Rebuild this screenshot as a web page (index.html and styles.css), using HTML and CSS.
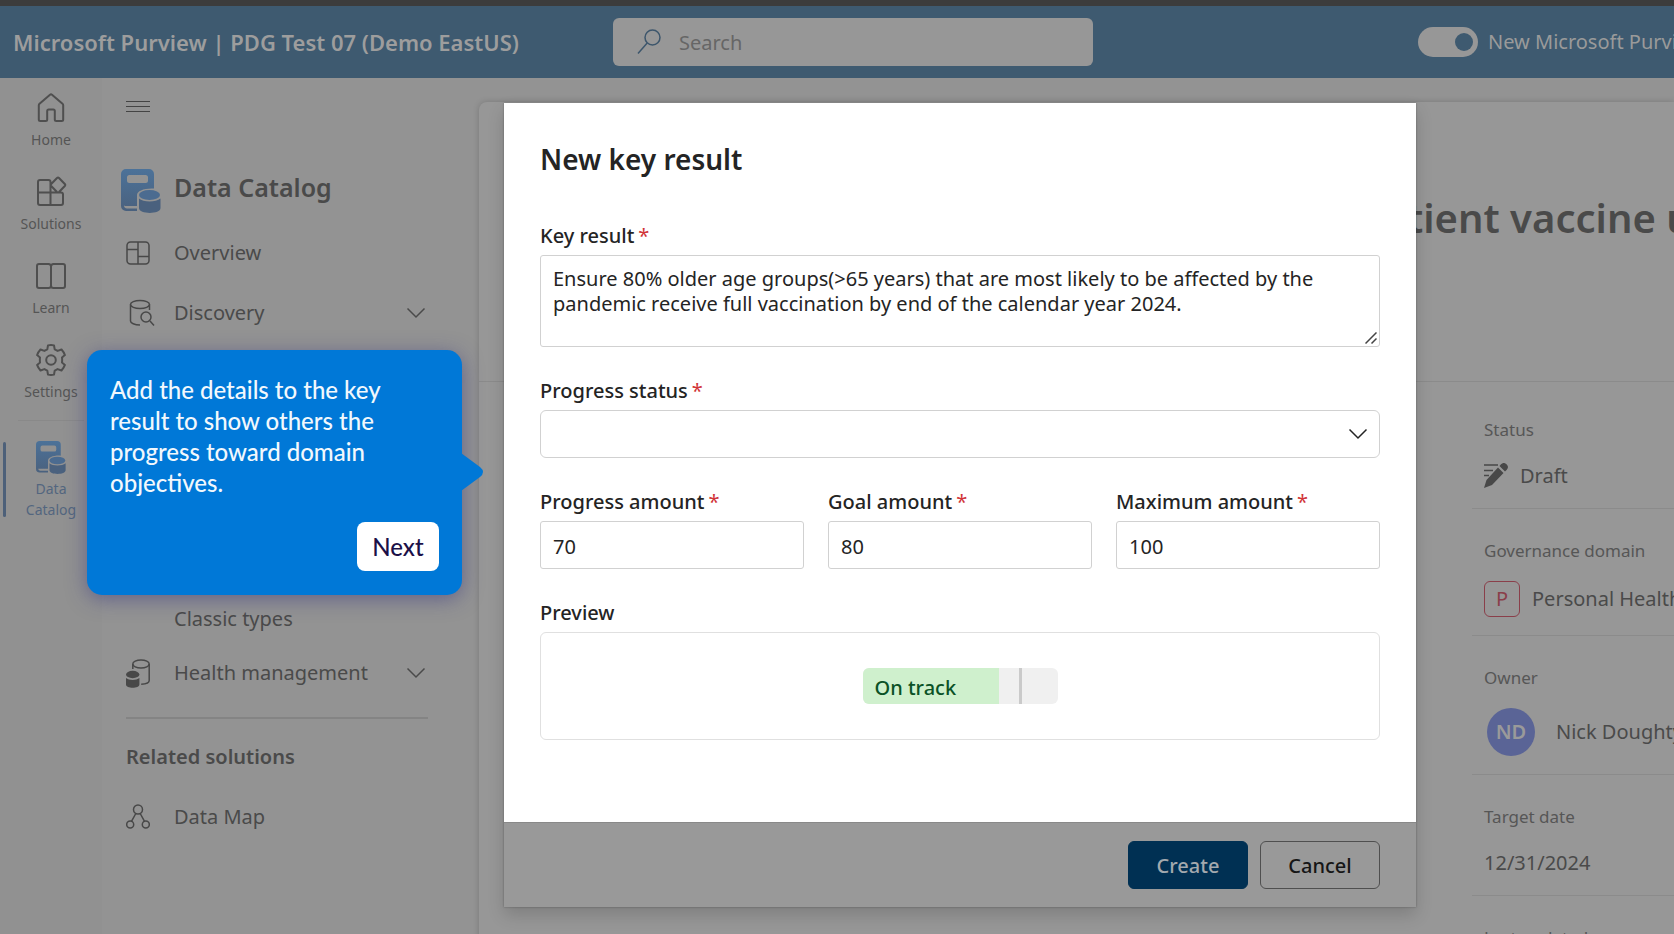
FILE: index.html
```html
<!DOCTYPE html>
<html lang="en">
<head>
<meta charset="utf-8">
<title>Microsoft Purview</title>
<link rel="stylesheet" href="styles.css">
</head>
<body>
<svg class="defs" aria-hidden="true">
  <defs>
    <linearGradient id="blue" x1="0" y1="0" x2="0" y2="1"><stop offset="0" stop-color="#4c7299"/><stop offset="1" stop-color="#4a617e"/></linearGradient>
    <symbol id="catalog" viewBox="0 0 40 44">
      <path fill="url(#blue)" fill-rule="evenodd" d="M5 0H28a5 5 0 0 1 5 5V19.500C23 19 16 22 16 26V42H5a5 5 0 0 1-5-5V5a5 5 0 0 1 5-5ZM8.500 6a2.500 2.500 0 0 0-2.500 2.500v3a2.500 2.500 0 0 0 2.500 2.500h16a2.500 2.500 0 0 0 2.500-2.500v-3a2.500 2.500 0 0 0-2.500-2.500ZM3 36.500c0 2 1.500 3 3 3h10v-2.500H5c-1 0-2-.2-2-.5Z"/>
      <ellipse cx="28.500" cy="26" rx="10.500" ry="5" fill="#4b6b90"/>
      <path fill="#4a617e" d="M18 29.500c4 4 17 4 21.500 0V39c0 6.500-21.500 6.500-21.500 0Z"/>
    </symbol>
    <symbol id="chevron" viewBox="0 0 20 12"><path d="M1.500 1.500 10 10l8.500-8.500" fill="none" stroke="currentColor" stroke-width="1.500"/></symbol>
  </defs>
</svg>

<header class="topbar">
  <span class="brand">Microsoft Purview | PDG Test 07 (Demo EastUS)</span>
  <label class="search">
    <svg width="24" height="26" viewBox="0 0 24 26" fill="none" stroke="#3d566c" stroke-width="1.500"><circle cx="15.500" cy="8.500" r="7.500"/><path d="M10.200 14 1 24.500"/></svg>
    <input type="search" placeholder="Search" aria-label="Search">
  </label>
  <label class="portal"><input type="checkbox" class="switch" checked>New Microsoft Purview portal</label>
</header>

<div class="shell">
  <nav class="rail" aria-label="Global">
    <a href="#"><svg width="32" height="32" viewBox="0 0 32 32"><path d="M15 2.700a1.600 1.600 0 0 1 2 0l10.500 9a2 2 0 0 1 .7 1.500V27.500a1.500 1.500 0 0 1-1.500 1.500h-5.400a1.500 1.500 0 0 1-1.500-1.500V19a1.500 1.500 0 0 0-1.500-1.500h-4.600a1.500 1.500 0 0 0-1.500 1.500v8.500a1.500 1.500 0 0 1-1.500 1.500H5.300a1.500 1.500 0 0 1-1.500-1.500V13.200a2 2 0 0 1 .7-1.500Z"/></svg>Home</a>
    <a href="#"><svg width="32" height="32" viewBox="0 0 32 32"><path d="M15.500 16.500H3V6a2 2 0 0 1 2-2h8.500a2 2 0 0 1 2 2V29M3 16.500V27a2 2 0 0 0 2 2h21a2 2 0 0 0 2-2v-8.500a2 2 0 0 0-2-2H15.500M22 2l-5.800 6a1.500 1.500 0 0 0 0 2l5.800 6a1.500 1.500 0 0 0 2 0l5.800-6a1.500 1.500 0 0 0 0-2L24 2a1.500 1.500 0 0 0-2 0Z"/></svg>Solutions</a>
    <a href="#"><svg width="32" height="32" viewBox="0 0 32 32"><path d="M16 6.500a2.500 2.500 0 0 0-2.500-2.500H4a2 2 0 0 0-2 2v20a2 2 0 0 0 2 2h9.500a2.500 2.500 0 0 0 2.500-2.500M16 6.500a2.500 2.500 0 0 1 2.500-2.500H28a2 2 0 0 1 2 2v20a2 2 0 0 1-2 2h-9.500a2.500 2.500 0 0 1-2.500-2.500V6.500"/></svg>Learn</a>
    <a href="#"><svg width="32" height="32" viewBox="0 0 32 32"><circle cx="16" cy="16" r="4.800"/><path d="M13 1.400Q16 .6 19 1.400L19.700 5.400Q21.200 6 22.600 6.900L26.500 5.500Q28.800 8 29.900 11.100L27 13.500Q27.300 16 27 18.500L29.900 20.900Q28.800 24 26.500 26.500L22.600 25.100Q21.200 26 19.700 26.600L19 30.600Q16 31.400 13 30.600L12.300 26.600Q10.800 26 9.400 25.100L5.500 26.500Q3.200 24 2.100 20.900L5 18.500Q4.700 16 5 13.500L2.100 11.100Q3.200 8 5.500 5.500L9.400 6.900Q10.800 6 12.300 5.400Z"/></svg>Settings</a>
    <hr>
    <a href="#" class="active" aria-current="page"><svg class="solid" width="30" height="33"><use href="#catalog"/></svg>Data<br>Catalog</a>
  </nav>

  <nav class="sidenav" aria-label="Data Catalog">
    <button class="menu" type="button" aria-label="Collapse menu"><svg width="24" height="12" viewBox="0 0 24 12"><path d="M0 .5h24M0 5.500h24M0 10.500h24" stroke="#444" stroke-width="1"/></svg></button>
    <h2><svg width="40" height="44"><use href="#catalog"/></svg>Data Catalog</h2>
    <a href="#" class="item"><svg width="24" height="24" viewBox="0 0 24 24"><rect x="1" y="1" width="22" height="22" rx="3.500"/><path d="M12 1v22M1 8.500h11M12 15.500h11"/></svg>Overview</a>
    <a href="#" class="item"><svg width="30" height="28" viewBox="0 0 30 28"><ellipse cx="14" cy="5.500" rx="9.500" ry="4"/><path d="M4.500 5.500V22c0 2 4 4 9.500 4M23.500 5.500V11M24 22l4 4.500"/><circle cx="20" cy="18" r="5"/></svg>Discovery<svg class="chev" width="20" height="12"><use href="#chevron"/></svg></a>
    <a href="#" class="subitem">Classic types</a>
    <a href="#" class="item"><svg width="24" height="29" viewBox="0 0 24 29"><ellipse cx="15" cy="5" rx="8.200" ry="4"/><path d="M6.800 5v5M23.200 5v16.500c0 2-3 3.500-8 3.700"/><g fill="#484848" stroke="none"><ellipse cx="6.700" cy="15.500" rx="6.700" ry="3.700"/><path d="M0 19c3 2.500 10.400 2.500 13.400 0v6.500c0 4.300-13.400 4.300-13.400 0Z"/></g></svg>Health management<svg class="chev" width="20" height="12"><use href="#chevron"/></svg></a>
    <hr>
    <h3>Related solutions</h3>
    <a href="#" class="item"><svg width="24" height="26" viewBox="0 0 24 26"><circle cx="12" cy="5.500" r="4.500"/><circle cx="4.200" cy="20.500" r="3.500"/><circle cx="19.800" cy="20.500" r="3.500"/><path d="M9.800 9.500 5.600 17.200M14.200 9.500l4.200 7.700"/></svg>Data Map</a>
  </nav>

  <main class="page">
    <div class="pagehead"><h1>Patient vaccine uptake</h1></div>
    <dl class="details">
      <div class="row"><dt>Status</dt><dd><svg width="24" height="26" viewBox="0 0 24 26"><path d="M0 2h14M0 7.500h9M0 12.500h5" stroke="#484848" stroke-width="1.700"/><path d="M0 25 2.500 17 14 4.500 19.500 10 8 22Z M15.500 3l1.500-1.700a4 4 0 0 1 5.800 5.500L21 8.600Z" fill="#484848"/></svg>Draft</dd></div>
      <div class="row domain"><dt>Governance domain</dt><dd><span class="badge">P</span>Personal Health</dd></div>
      <div class="row owner"><dt>Owner</dt><dd><span class="avatar">ND</span>Nick Doughty</dd></div>
      <div class="row"><dt>Target date</dt><dd>12/31/2024</dd></div>
      <div class="row"><dt>Last updated</dt></div>
    </dl>

    <form class="dialog" role="dialog" aria-labelledby="dlg-title">
      <div class="fields">
        <h2 id="dlg-title">New key result</h2>
        <div class="field">
          <label for="kr">Key result<b>*</b></label>
          <div class="textbox">
            <textarea id="kr">Ensure 80% older age groups(&gt;65 years) that are most likely to be affected by the pandemic receive full vaccination by end of the calendar year 2024.</textarea>
            <svg width="12" height="12" viewBox="0 0 12 12"><path d="M.5 11.500 11.500.5M6.500 11.500l5-5" fill="none" stroke="#444" stroke-width="1.500"/></svg>
          </div>
        </div>
        <div class="field">
          <label for="status">Progress status<b>*</b></label>
          <div class="selectbox">
            <select id="status"><option></option></select>
            <svg width="20" height="12"><use href="#chevron"/></svg>
          </div>
        </div>
        <div class="amounts">
          <div class="field"><label for="progress">Progress amount<b>*</b></label><input id="progress" type="text" value="70"></div>
          <div class="field"><label for="goal">Goal amount<b>*</b></label><input id="goal" type="text" value="80"></div>
          <div class="field"><label for="max">Maximum amount<b>*</b></label><input id="max" type="text" value="100"></div>
        </div>
        <div class="field">
          <span class="caption">Preview</span>
          <div class="preview">
            <div class="bar"><div class="fill" style="width:70%">On track</div><div class="goal" style="left:80%"></div></div>
          </div>
        </div>
      </div>
      <div class="actions">
        <button type="button" class="primary">Create</button>
        <button type="button">Cancel</button>
      </div>
    </form>
  </main>
</div>

<aside class="coach">
  <p>Add the details to the key result to show others the progress toward domain objectives.</p>
  <button type="button">Next</button>
  <svg class="arrow" width="23" height="38" viewBox="0 0 23 38"><path d="M0 0 19 14Q25 19 19 24L0 38Z" fill="#0078d7"/></svg>
</aside>
</body>
</html>
```
FILE: styles.css
```css
* { box-sizing: border-box; }
body {
  margin: 0;
  height: 100vh;
  overflow: hidden;
  display: flex;
  flex-direction: column;
  position: relative;
  background: #939393;
  color: #4a4a4a;
  font: 20px/24px "Noto Sans", "Open Sans", sans-serif;
}
h1, h2, h3, p, dl, dd { margin: 0; }
h1, h2, h3 { font-weight: 600; }
a { color: inherit; text-decoration: none; }
button, input, select, textarea { font: inherit; color: inherit; }
.defs { position: absolute; width: 0; height: 0; }

.topbar {
  flex: none;
  display: grid;
  grid-template-columns: 600px 480px minmax(0, 1fr);
  align-items: center;
  height: 78px;
  padding-left: 13px;
  border-top: 6px solid #3c3c3c;
  background: #3e5a70;
  white-space: nowrap;
}
.brand { color: #9d9d9d; font-size: 22px; font-weight: 600; }
.search {
  display: flex;
  align-items: center;
  gap: 18px;
  height: 48px;
  padding: 0 24px;
  border-radius: 6px;
  background: #979797;
}
.search input { flex: 1; min-width: 0; padding: 2px 0 0; border: 0; outline: 0; background: none; }
.search input::placeholder { color: #666; opacity: 1; }
.portal {
  display: flex;
  align-items: center;
  gap: 10px;
  margin-left: 325px;
  overflow: hidden;
  color: #9a9a9a;
}
.switch {
  appearance: none;
  flex: none;
  display: flex;
  justify-content: flex-end;
  align-items: center;
  width: 60px;
  height: 30px;
  margin: 0;
  padding: 0 5px;
  border-radius: 15px;
  background: #979797;
}
.switch::before { content: ""; width: 18px; height: 18px; border-radius: 50%; background: #3e5a70; }

.shell { flex: 1; min-height: 0; display: grid; grid-template-columns: 102px 377px minmax(0, 1fr); }

.rail { padding-top: 2px; background: #919191; color: #555; font-size: 14px; line-height: 21px; text-align: center; }
.rail a { position: relative; display: flex; flex-direction: column; align-items: center; gap: 5px; height: 84px; padding-top: 12px; }
.rail svg { fill: none; stroke: #4f4f4f; stroke-width: 2; stroke-linejoin: round; flex: none; }
.rail svg.solid { stroke: none; }
.rail hr { height: 1px; margin: 4px 18px 8px; border: 0; background: #898989; }
.rail .active { gap: 4px; height: 96px; color: #53667f; }
.rail .active::before { content: ""; position: absolute; left: 3px; top: 13px; bottom: 8px; width: 3px; border-radius: 2px; background: #4d6079; }

.sidenav { padding: 17px 51px 0 24px; }
.menu { display: flex; align-items: center; height: 24px; padding: 0; border: 0; background: none; }
.sidenav h2 { display: flex; gap: 13px; height: 60px; padding-top: 10px; margin: 40px 0 4px -5px; font-size: 25px; line-height: 36px; }
.item { display: grid; grid-template-columns: 24px 1fr 20px; column-gap: 24px; align-items: center; height: 60px; padding-right: 2px; white-space: nowrap; }
.item svg { fill: none; stroke: #484848; stroke-width: 1.500; }
.subitem { display: flex; align-items: center; height: 48px; padding-left: 48px; margin-top: 252px; }
.sidenav hr { height: 2px; margin: 14px 0 8px; border: 0; background: #848484; }
.sidenav h3 { font-size: 20px; line-height: 60px; }

.page {
  position: relative;
  display: flex;
  flex-direction: column;
  margin-top: 24px;
  border-top-left-radius: 8px;
  background: #979797;
  box-shadow: 0 0 6px rgba(0, 0, 0, .18);
}
.pagehead { height: 280px; padding: 88px 0 0 880px; border-bottom: 1px solid #8b8b8b; overflow: hidden; }
.pagehead h1 { font-size: 40px; line-height: 56px; white-space: nowrap; }
.details { width: 202px; margin-left: auto; padding-top: 6px; white-space: nowrap; }
.row { display: flex; flex-direction: column; gap: 10px; padding: 30px 0 8px 12px; border-bottom: 1px solid #8b8b8b; overflow: hidden; }
.row dt { font-size: 17px; color: #565656; }
.row dd { display: flex; align-items: center; gap: 12px; height: 48px; }
.domain { gap: 12px; padding-bottom: 12px; }
.owner { gap: 18px; padding-bottom: 18px; }
.badge { flex: none; width: 36px; height: 36px; border: 1px solid #8a3f4a; border-radius: 6px; color: #8a3f4a; line-height: 34px; text-align: center; }
.avatar { flex: none; width: 48px; height: 48px; margin: 0 9px 0 3px; border-radius: 50%; background: #5a6496; color: #9a9a9a; font-weight: 600; line-height: 48px; text-align: center; }

.dialog {
  position: absolute;
  top: 1px;
  left: 25px;
  right: 258px;
  background: #fff;
  color: #242424;
  box-shadow: 0 0 2px rgba(0, 0, 0, .3), 0 8px 16px rgba(0, 0, 0, .16);
}
.fields { display: flex; flex-direction: column; gap: 32px; padding: 36px 36px 82px; }
.fields h2 { margin-bottom: 13px; font-size: 28px; line-height: 40px; }
.field { display: flex; flex-direction: column; gap: 7px; min-width: 0; }
.field label, .caption { font-weight: 500; }
.field b { margin-left: 4px; color: #d13438; font-weight: 400; }
.field input, .field textarea, .field select {
  width: 100%;
  height: 48px;
  padding: 2px 12px 0;
  border: 1px solid #d1d1d1;
  border-radius: 3px;
  outline: 0;
  background: #fff;
}
.field textarea { display: block; height: 92px; padding: 10px 12px; line-height: 25px; resize: none; }
.selectbox, .textbox { display: grid; align-items: center; }
.selectbox > *, .textbox > * { grid-area: 1 / 1; }
.selectbox svg { justify-self: end; margin-right: 12px; pointer-events: none; }
.textbox svg { place-self: end; margin: 0 3px 3px 0; }
.field select { appearance: none; border-radius: 6px; }
.amounts { display: grid; grid-template-columns: repeat(3, 1fr); gap: 24px; }
.preview { display: flex; justify-content: center; align-items: center; height: 108px; border: 1px solid #e0e0e0; border-radius: 6px; }
.bar { position: relative; width: 195px; height: 36px; border-radius: 6px; overflow: hidden; background: #f0f0f0; }
.fill { height: 100%; padding-left: 12px; background: #cff0cd; color: #0b5226; font-weight: 500; line-height: 40px; }
.goal { position: absolute; top: 0; bottom: 0; width: 3px; background: #cacaca; }
.actions { display: flex; justify-content: flex-end; gap: 12px; padding: 18px 36px; border-top: 1px solid #898989; background: #999; }
.actions button { width: 120px; height: 48px; padding: 2px 0 0; border: 1px solid #4f4f4f; border-radius: 6px; background: none; color: #161616; font-weight: 500; }
.actions .primary { border-color: #003053; background: #003053; color: #a3a9ae; }

.coach {
  position: absolute;
  top: 350px;
  left: 87px;
  width: 375px;
  padding: 24px 23px;
  border-radius: 15px;
  background: #0078d7;
  color: #f2f8fd;
  box-shadow: 0 4px 20px rgba(50, 50, 130, .5);
  font-family: Lato, sans-serif;
  font-size: 24px;
  font-weight: 500;
}
.coach p { margin: 0 24px 24px 0; line-height: 31px; }
.coach button { display: block; width: 82px; height: 49px; margin-left: auto; padding: 0; border: 0; border-radius: 8px; background: #fff; color: #1b1048; }
.arrow { position: absolute; left: 100%; top: 103px; margin-left: -1px; }
```
